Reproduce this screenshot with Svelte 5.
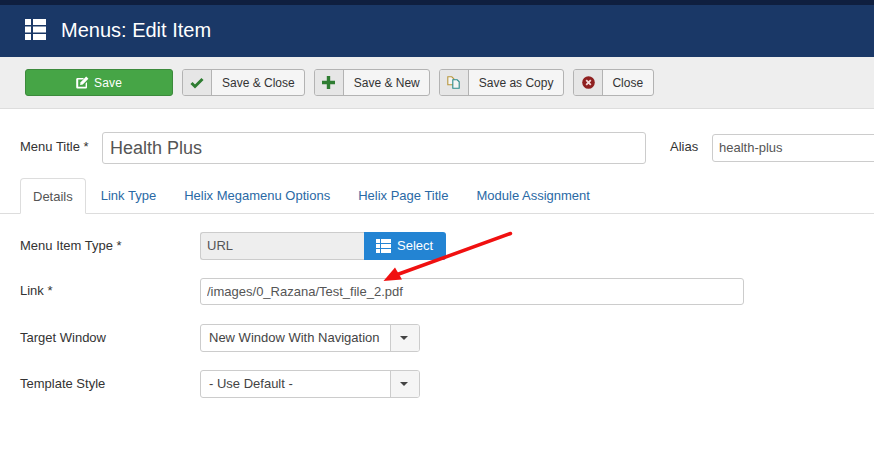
<script>
  const toolbar = [
    { label: "Save & Close", icon: "check" },
    { label: "Save & New", icon: "plus" },
    { label: "Save as Copy", icon: "copy" },
    { label: "Close", icon: "cancel" }
  ];
  const tabs = ["Link Type", "Helix Megamenu Options", "Helix Page Title", "Module Assignment"];
</script>

<div class="page">
  <div class="topstrip"></div>
  <header class="titlebar">
    <svg class="menuicon" width="21" height="21" viewBox="0 0 21 21">
      <path fill="#fff" d="M0 0h6v6H0zM8 0h13v6H8zM0 7.500h6v6H0zM8 7.500h13v6H8zM0 15h6v6H0zM8 15h13v6H8z" />
    </svg>
    <h1>Menus: Edit Item</h1>
  </header>

  <div class="toolbar">
    <button class="save">
      <svg width="13" height="13" viewBox="0 0 13 13">
        <path fill="#fff" d="M1.500 2H8L6.600 3.400H2.200v7.400h7.400V7.400L11 6v5.200c0 .7-.6 1.300-1.300 1.300H1.500C.8 12.500.2 11.900.2 11.200V3.300C.2 2.600.8 2 1.500 2z" />
        <path fill="#fff" d="M10.200.6l2.200 2.200-5.600 5.700-2.700.5.500-2.700z" />
      </svg>
      Save
    </button>
    {#each toolbar as item}
      <button class="tool">
        <span class="tool-icon">
          {#if item.icon === "check"}
            <svg width="14" height="12" viewBox="0 0 14 12">
              <path fill="none" stroke="#2f7d32" stroke-width="3" d="M1.500 6l3.500 3.500 7.500-7.500" />
            </svg>
          {:else if item.icon === "plus"}
            <svg width="13" height="13" viewBox="0 0 13 13">
              <path fill="#2f7d32" d="M4.800 0h3.400v4.800H13v3.400H8.200V13H4.800V8.200H0V4.800h4.800z" />
            </svg>
          {:else if item.icon === "copy"}
            <svg width="13" height="13" viewBox="0 0 13 13">
              <path fill="#f4f4f4" stroke="#b8963c" stroke-width="1.100" d="M.8.800h4l2 2v6h-6z" />
              <path fill="#f4f4f4" stroke="#2a8a8a" stroke-width="1.100" d="M5.800 3.800h4.400l2 2v6.400H5.800z" />
            </svg>
          {:else}
            <svg width="13" height="13" viewBox="0 0 13 13">
              <circle cx="6.500" cy="6.500" r="6.300" fill="#8f2020" />
              <path stroke="#f3dada" stroke-width="1.800" d="M4.200 4.200l4.600 4.600M8.800 4.200l-4.600 4.600" />
            </svg>
          {/if}
        </span>
        <span class="tool-label {item.icon}">{item.label}</span>
      </button>
    {/each}
  </div>

  <main class="content">
    <div class="titlerow">
      <label class="title-label" for="title">Menu Title *</label>
      <input id="title" class="title-input" value="Health Plus" />
      <label class="alias-label" for="alias">Alias</label>
      <input id="alias" class="alias-input" value="health-plus" />
    </div>

    <nav class="tabs">
      <span class="tab active">Details</span>
      {#each tabs as tab}
        <span class="tab">{tab}</span>
      {/each}
    </nav>

    <div class="form">
      <div class="row">
        <span class="row-label">Menu Item Type *</span>
        <div class="typegroup">
          <span class="typevalue">URL</span>
          <button class="select">
            <svg width="15" height="14" viewBox="0 0 15 14">
              <path fill="#fff" d="M0 0h4v4H0zM5 0h10v4H5zM0 5h4v4H0zM5 5h10v4H5zM0 10h4v4H0zM5 10h10v4H5z" />
            </svg>
            Select
          </button>
        </div>
      </div>
      <div class="row linkrow">
        <span class="row-label">Link *</span>
        <input class="link-input" value="/images/0_Razana/Test_file_2.pdf" />
      </div>
      <div class="row">
        <span class="row-label">Target Window</span>
        <div class="dropdown">
          <span class="dd-value">New Window With Navigation</span>
          <span class="dd-caret"></span>
        </div>
      </div>
      <div class="row">
        <span class="row-label">Template Style</span>
        <div class="dropdown">
          <span class="dd-value">- Use Default -</span>
          <span class="dd-caret"></span>
        </div>
      </div>
    </div>
  </main>

  <svg class="arrow" width="874" height="456" viewBox="0 0 874 456">
    <path fill="none" stroke="#f01010" stroke-width="3.500" stroke-linecap="round" d="M510.500 233.500L396 275" />
    <path fill="#f01010" d="M383.500 281L395 267.500L402 279.500z" />
  </svg>
</div>

<style>
  :global(body) {
    margin: 0;
    background: #fff;
  }

  .page {
    position: relative;
    width: 874px;
    height: 456px;
    overflow: hidden;
    font-family: "Liberation Sans", Arial, sans-serif;
    font-size: 13px;
    color: #333;
  }

  .topstrip {
    height: 5px;
    background: #0f1f3f;
  }

  .titlebar {
    display: flex;
    align-items: center;
    height: 52px;
    padding-left: 25px;
    box-sizing: border-box;
    background: #1a3867;
    color: #fff;
  }

  .menuicon {
    margin-right: 15px;
    margin-top: -3px;
  }

  h1 {
    margin: 0;
    font-size: 20px;
    font-weight: 400;
    line-height: 24px;
    margin-top: -2px;
  }

  .toolbar {
    display: flex;
    align-items: flex-start;
    gap: 9px;
    height: 52px;
    padding: 12px 0 0 25px;
    box-sizing: border-box;
    background: #eee;
    border-bottom: 1px solid #ddd;
  }

  button {
    font: inherit;
    cursor: pointer;
  }

  .save {
    display: flex;
    align-items: center;
    justify-content: center;
    gap: 5px;
    width: 148px;
    height: 27px;
    padding: 0;
    background: #46a546;
    border: 1px solid #3c8a3c;
    border-radius: 3px;
    color: #fff;
    font-size: 12px;
    letter-spacing: 0.2px;
  }

  .tool {
    display: flex;
    align-items: stretch;
    height: 27px;
    padding: 0;
    background: #f5f5f5;
    border: 1px solid #b3b3b3;
    border-radius: 3px;
    color: #333;
    font-size: 12px;
  }

  .tool-icon {
    display: flex;
    align-items: center;
    justify-content: center;
    width: 28px;
    background: #e6e6e6;
    border-right: 1px solid #b3b3b3;
    border-radius: 2px 0 0 2px;
  }

  .tool-label {
    display: flex;
    align-items: center;
    padding: 0 9px 0 10px;
  }

  .tool-label.copy {
    padding-right: 10px;
  }

  .tool-label.cancel {
    padding: 0 10px 0 9px;
  }

  .content {
    padding-left: 20px;
  }

  .titlerow {
    display: flex;
    align-items: flex-start;
    padding-top: 23px;
  }

  .title-label {
    flex: none;
    width: 82px;
    padding-top: 7px;
    line-height: 15px;
  }

  input {
    flex: none;
    font-family: inherit;
    box-sizing: border-box;
    background: #fff;
    border: 1px solid #ccc;
    border-radius: 3px;
    color: #555;
    outline: none;
  }

  .title-input {
    width: 544px;
    height: 32px;
    padding: 0 7px;
    font-size: 18px;
  }

  .alias-label {
    flex: none;
    margin-left: 24px;
    width: 42px;
    padding-top: 7px;
    line-height: 15px;
  }

  .alias-input {
    width: 200px;
    height: 28px;
    margin-top: 2px;
    padding: 0 6px 2px;
    font-size: 13px;
  }

  .tabs {
    display: flex;
    height: 36px;
    margin: 14px 0 0 -20px;
    padding-left: 20px;
    box-sizing: border-box;
    border-bottom: 1px solid #ddd;
  }

  .tab {
    height: 36px;
    padding: 0 14px;
    box-sizing: border-box;
    line-height: 36px;
    color: #2a69a5;
    white-space: nowrap;
  }

  .active {
    margin-right: 1px;
    background: #fff;
    border: 1px solid #ddd;
    border-bottom-color: #fff;
    border-radius: 4px 4px 0 0;
    padding: 0 12px;
    line-height: 35px;
    color: #555;
  }

  .form {
    display: flex;
    flex-direction: column;
    gap: 18px;
    padding-top: 18px;
  }

  .row {
    display: flex;
    align-items: center;
    height: 28px;
  }

  .linkrow {
    height: 27px;
    margin-bottom: 1px;
  }

  .row-label {
    width: 180px;
    margin-top: -2px;
  }

  .typegroup {
    display: flex;
    height: 28px;
  }

  .typevalue {
    display: flex;
    align-items: center;
    width: 164px;
    padding: 0 0 2px 6px;
    box-sizing: border-box;
    background: #eee;
    border: 1px solid #ccc;
    border-right: 0;
    border-radius: 3px 0 0 3px;
    color: #555;
  }

  .select {
    display: flex;
    align-items: center;
    gap: 6px;
    width: 82px;
    padding: 0 0 1px 12px;
    box-sizing: border-box;
    background: #2384d3;
    border: 0;
    border-radius: 0 3px 3px 0;
    color: #fff;
    font-size: 13px;
  }

  .link-input {
    width: 544px;
    height: 27px;
    padding: 0 6px 1px;
    font-size: 13px;
  }

  .dropdown {
    display: flex;
    width: 220px;
    height: 28px;
    box-sizing: border-box;
    background: #fff;
    border: 1px solid #ccc;
    border-radius: 3px;
    color: #444;
  }

  .dd-value {
    flex: 1;
    padding-left: 8px;
    line-height: 26px;
    white-space: nowrap;
  }

  .dd-caret {
    position: relative;
    width: 28px;
    background: #f5f5f5;
    border-left: 1px solid #ccc;
    border-radius: 0 2px 2px 0;
  }

  .dd-caret::after {
    content: "";
    position: absolute;
    left: 9px;
    top: 11px;
    border-left: 4px solid transparent;
    border-right: 4px solid transparent;
    border-top: 4px solid #444;
  }

  .arrow {
    position: absolute;
    left: 0;
    top: 0;
    pointer-events: none;
  }
</style>
